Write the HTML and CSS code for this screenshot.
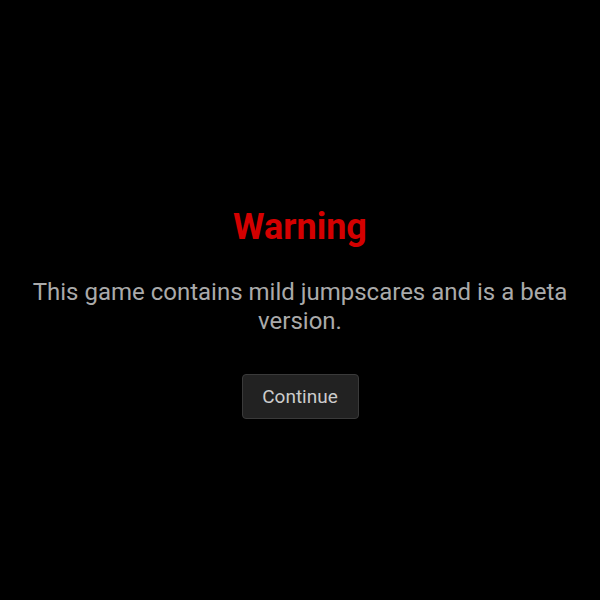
FILE: index.html
```html
<!DOCTYPE html>
<html lang="en">

<head>
    <meta charset="UTF-8">
    <meta name="viewport" content="width=device-width, initial-scale=1.0">
    <title>Warning</title>
    <link rel="stylesheet" href="styles.css">
</head>

<body>
    <div class="warning">
        <h1 class="warning_title">Warning</h1>
        <p class="warning_text">This game contains mild jumpscares and is a beta version.</p>
        <button class="warning_btn">Continue</button>
    </div>
</body>

</html>
```

FILE: styles.css
```css
* {
    margin: 0;
    padding: 0;
    box-sizing: border-box;
}

body {
    background-color: #000;
    font-family: Roboto, "Liberation Sans", sans-serif;
}

.warning {
    height: 600px;
    display: flex;
    flex-direction: column;
    align-items: center;
    padding: 206px 30px 0;
    text-align: center;
}

.warning_title {
    color: #d40000;
    font-size: 36px;
    font-weight: 700;
    line-height: 42px;
}

.warning_text {
    margin-top: 30px;
    color: #aaa;
    font-size: 24px;
    line-height: 29px;
}

.warning_btn {
    margin-top: 38px;
    width: 117px;
    height: 45px;
    background-color: #222;
    color: #ccc;
    border: 1px solid #3a3a3a;
    border-radius: 4px;
    font-family: inherit;
    font-size: 19px;
}
```
